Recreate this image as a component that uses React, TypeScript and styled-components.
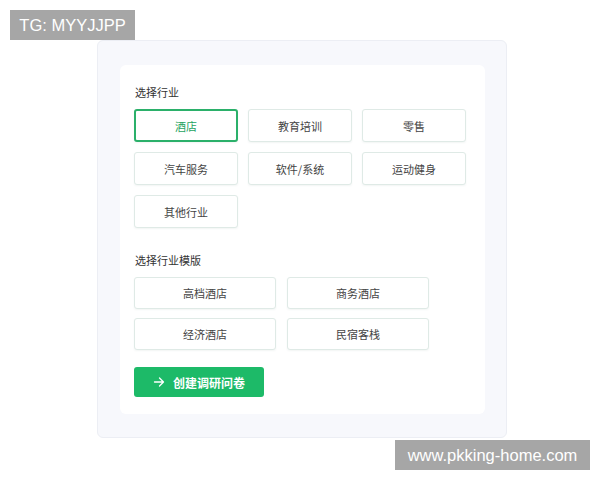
import React from "react";
import styled, { createGlobalStyle } from "styled-components";

const GlobalStyle = createGlobalStyle`
  html, body {
    margin: 0;
    padding: 0;
    background: #ffffff;
  }
  body {
    font-family: "Noto Sans CJK SC", "Noto Sans", sans-serif;
  }
`;

const Page = styled.div`
  position: relative;
  width: 600px;
  height: 480px;
  overflow: hidden;
  padding: 40px 0 0 97px;
  box-sizing: border-box;
`;

const Watermark = styled.div<{ $top: number; $left: number; $w: number }>`
  position: absolute;
  top: ${(p) => p.$top}px;
  left: ${(p) => p.$left}px;
  width: ${(p) => p.$w}px;
  height: 30px;
  display: flex;
  align-items: center;
  justify-content: center;
  background: #a6a6a6;
  color: #ffffff;
  font-family: "Liberation Sans", Arial, sans-serif;
  font-size: 16.5px;
  z-index: 2;
`;

const Panel = styled.div`
  width: 410px;
  height: 398px;
  box-sizing: border-box;
  padding: 24px 21px 23px 22px;
  background: #f7f8fc;
  border: 1px solid #eceef4;
  border-radius: 6px;
`;

const Card = styled.div`
  height: 100%;
  box-sizing: border-box;
  background: #ffffff;
  border-radius: 6px;
  padding: 20px 14px 0 14px;
  display: flex;
  flex-direction: column;
`;

const Label = styled.div<{ $mt?: number }>`
  font-size: 11px;
  line-height: 14px;
  color: #333333;
  margin: ${(p) => p.$mt ?? 0}px 0 10px 1px;
`;

const Grid = styled.div<{ $cols: number; $w: number; $colGap: number; $rowGap: number }>`
  display: grid;
  grid-template-columns: repeat(${(p) => p.$cols}, ${(p) => p.$w}px);
  column-gap: ${(p) => p.$colGap}px;
  row-gap: ${(p) => p.$rowGap}px;
`;

const Option = styled.div<{ $active?: boolean; $h: number }>`
  height: ${(p) => p.$h}px;
  box-sizing: border-box;
  display: flex;
  align-items: center;
  justify-content: center;
  font-size: 11px;
  color: ${(p) => (p.$active ? "#25a35f" : "#444444")};
  border: ${(p) => (p.$active ? "2px solid #2bb06a" : "1px solid #dfeae6")};
  border-radius: 3px;
  background: #ffffff;
  box-shadow: 0 1px 2px rgba(40, 90, 70, 0.06);
`;

const Cta = styled.button`
  margin-top: 17px;
  width: 130px;
  height: 30px;
  border: none;
  border-radius: 3px;
  background: #1dba68;
  color: #ffffff;
  font-family: "Noto Sans CJK SC", sans-serif;
  font-size: 12px;
  font-weight: 700;
  display: flex;
  align-items: center;
  justify-content: center;
  gap: 8px;
  padding: 0;
`;

const industries = ["酒店", "教育培训", "零售", "汽车服务", "软件/系统", "运动健身", "其他行业"];
const templates = ["高档酒店", "商务酒店", "经济酒店", "民宿客栈"];

export default function App() {
  return (
    <>
      <GlobalStyle />
      <Page>
        <Watermark $top={10} $left={10} $w={125}>TG: MYYJJPP</Watermark>
        <Panel>
          <Card>
            <Label>选择行业</Label>
            <Grid $cols={3} $w={104} $colGap={10} $rowGap={10}>
              {industries.map((name, i) => (
                <Option key={name} $h={33} $active={i === 0}>
                  {name}
                </Option>
              ))}
            </Grid>
            <Label $mt={25}>选择行业模版</Label>
            <Grid $cols={2} $w={142} $colGap={11} $rowGap={9}>
              {templates.map((name) => (
                <Option key={name} $h={32}>
                  {name}
                </Option>
              ))}
            </Grid>
            <Cta>
              <svg width="12" height="12" viewBox="0 0 12 12" fill="none">
                <path d="M1.5 6h9M6.5 2l4 4-4 4" stroke="#fff" strokeWidth="1.3" strokeLinecap="round" strokeLinejoin="round" />
              </svg>
              创建调研问卷
            </Cta>
          </Card>
        </Panel>
        <Watermark $top={440} $left={395} $w={195}>www.pkking-home.com</Watermark>
      </Page>
    </>
  );
}
